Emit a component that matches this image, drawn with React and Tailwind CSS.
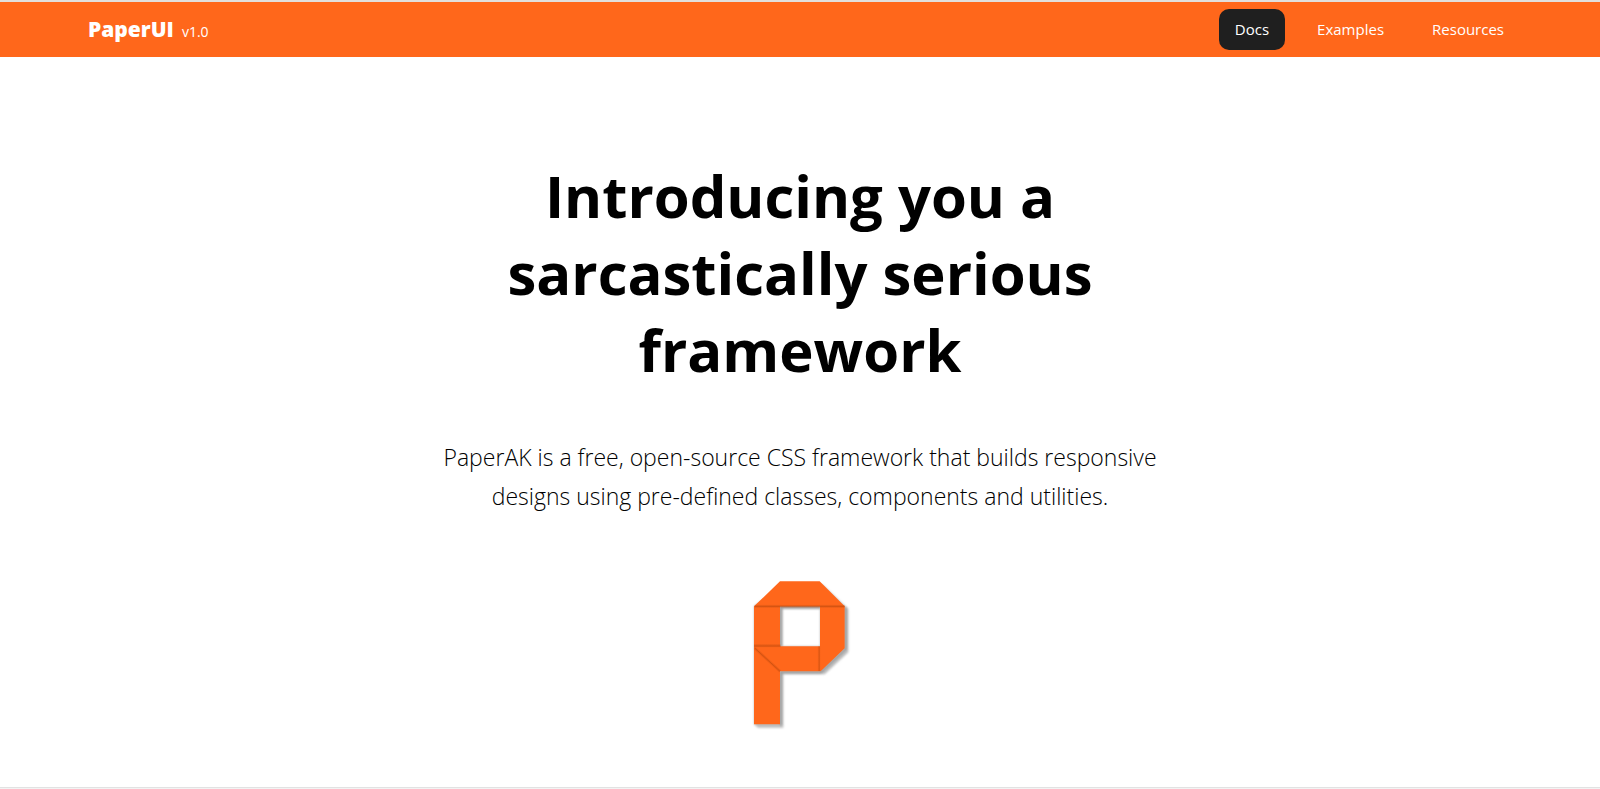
function NavLink({ href, active, children }) {
  const tone = active ? "bg-[#1f1f1f]" : "";
  return (
    <a href={href} className={`flex h-[41px] items-center rounded-[10px] px-4 text-[15px] text-white ${tone}`}>
      {children}
    </a>
  );
}

function PaperLogo() {
  return (
    <svg className="h-[180px] w-[140px]" viewBox="0 0 420 540" role="img" aria-label="PaperUI">
      <defs>
        <filter id="soft" x="-10%" y="-10%" width="120%" height="120%">
          <feGaussianBlur stdDeviation="2.5" />
        </filter>
        <linearGradient id="foldDown" x1="0" y1="0" x2="0" y2="1">
          <stop offset="0" stopColor="#b8470c" stopOpacity="0" />
          <stop offset="0.6" stopColor="#b8470c" stopOpacity="0.6" />
          <stop offset="1" stopColor="#b8470c" stopOpacity="0" />
        </linearGradient>
        <linearGradient id="foldRight" x1="0" y1="0" x2="1" y2="0">
          <stop offset="0" stopColor="#b8470c" stopOpacity="0" />
          <stop offset="0.6" stopColor="#b8470c" stopOpacity="0.5" />
          <stop offset="1" stopColor="#b8470c" stopOpacity="0" />
        </linearGradient>
      </defs>
      <path
        d="M160 59H278L355 132V262L284 328H160V488H84L72 478V124ZM158 132V244H270V132Z"
        fill="#bdbdbd"
        fillRule="evenodd"
        filter="url(#soft)"
      />
      <path d="M153 126V244M150 127H270M153 322V480M150 322H272L347 252V126" fill="none" stroke="#777" strokeWidth="5" opacity="0.6" filter="url(#soft)" />
      <path
        d="M150 49H269L344 124V250L272 319H150V478H72V124ZM150 124V244H270V124Z"
        fill="#ff671b"
        fillRule="evenodd"
      />
      <rect x="74" y="118" width="270" height="11" fill="url(#foldDown)" />
      <rect x="72" y="236" width="80" height="12" fill="url(#foldDown)" />
      <rect x="262" y="244" width="10" height="74" fill="url(#foldRight)" />
      <path d="M74 249L150 319" stroke="#b8470c" strokeWidth="8" opacity="0.25" />
      <path d="M74 249L150 319" stroke="#b8470c" strokeWidth="3" opacity="0.5" />
    </svg>
  );
}

export default function App() {
  return (
    <div className="bg-white font-['Open_Sans','Noto_Sans',sans-serif] text-black">
      <header className="border-t-2 border-[#e2dfdd] bg-[#ff671b]">
        <div className="flex h-[55px] items-center justify-between px-20">
          <a href="#home" className="flex items-baseline gap-2 px-2 text-white">
            <span className="text-[21px] font-extrabold">PaperUI</span>
            <span className="text-[14px]">v1.0</span>
          </a>
          <nav className="flex gap-4">
            <NavLink href="#docs" active>Docs</NavLink>
            <NavLink href="#examples">Examples</NavLink>
            <NavLink href="#resources">Resources</NavLink>
          </nav>
        </div>
      </header>
      <main className="flex flex-col items-center border-b border-[#e2e2e2] pt-[100px] pb-[42px] text-center">
        <h1 className="max-w-[660px] text-[58px] leading-[77px] font-bold">
          Introducing you a sarcastically serious framework
        </h1>
        <p className="mt-[50px] max-w-[740px] text-[23px] leading-[39px] font-light">
          PaperAK is a free, open-source CSS framework that builds responsive designs using pre-defined classes, components and utilities.
        </p>
        <div className="mt-[49px]">
          <PaperLogo />
        </div>
      </main>
      <footer className="h-px bg-[#f3f3f3]" />
    </div>
  );
}
